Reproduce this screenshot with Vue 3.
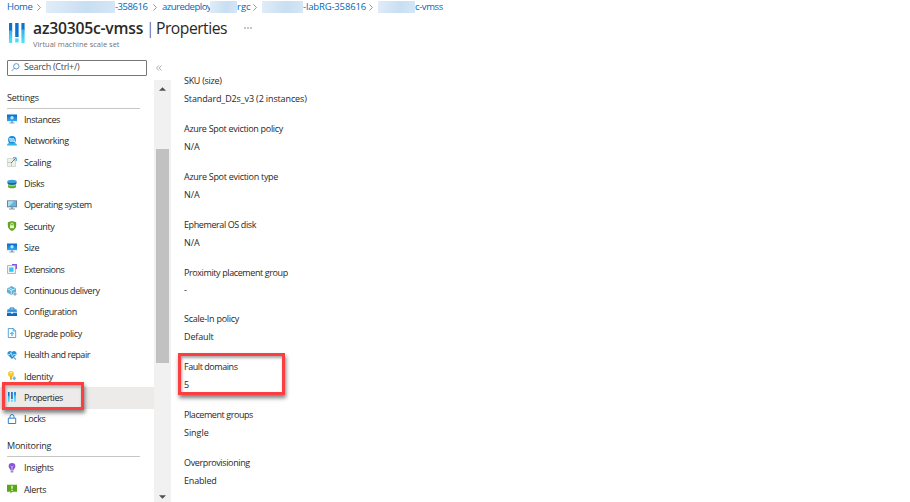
<script setup>
const crumbs = [
  { w: 39, text: 'Home', ls: -0.3, sep: true },
  { w: 69, mask: true },
  { w: 47, text: '-358616', ls: -0.45, sep: true },
  { w: 48, text: 'azuredeploy', ls: -0.5 },
  { w: 27, mask: true },
  { w: 25, text: 'rgc', ls: 0, sep: true },
  { w: 41, mask: true },
  { w: 75, text: '-labRG-358616', ls: -0.15, sep: true },
  { w: 37, mask: true },
  { w: 40, text: 'c-vmss', ls: -0.4 }
]
// label, icon, tracking
const groups = [
  {
    title: 'Settings',
    items: [
      ['Instances', 'monitor', -0.42], ['Networking', 'network', -0.38], ['Scaling', 'scaling', -0.3], ['Disks', 'disks', -0.4],
      ['Operating system', 'os', -0.4], ['Security', 'shield', -0.38], ['Size', 'monitor', -0.3], ['Extensions', 'extension', -0.5],
      ['Continuous delivery', 'delivery', -0.42], ['Configuration', 'toolbox', -0.35], ['Upgrade policy', 'upgrade', -0.35],
      ['Health and repair', 'health', -0.45], ['Identity', 'key', -0.35], ['Properties', 'bars', -0.48], ['Locks', 'lock', -0.4]
    ]
  },
  { title: 'Monitoring', items: [['Insights', 'bulb', -0.38], ['Alerts', 'alert', -0.35]] }
]
// label, value, label tracking, value tracking
const fields = [
  ['SKU (size)', 'Standard_D2s_v3 (2 instances)', -0.3, -0.13],
  ['Azure Spot eviction policy', 'N/A', -0.31, 0],
  ['Azure Spot eviction type', 'N/A', -0.29, 0],
  ['Ephemeral OS disk', 'N/A', -0.4, 0],
  ['Proximity placement group', '-', -0.4, 0],
  ['Scale-In policy', 'Default', -0.27, -0.15],
  ['Fault domains', '5', -0.45, 0],
  ['Placement groups', 'Single', -0.43, -0.05],
  ['Overprovisioning', 'Enabled', -0.37, -0.18]
]
</script>

<template>
  <div class="page">
    <svg class="defs" width="0" height="0">
      <defs>
        <linearGradient id="blue" x2="0" y2="1"><stop stop-color="#0869c9" /><stop offset="1" stop-color="#38a5f5" /></linearGradient>
        <linearGradient id="cyan" x2="0" y2="1"><stop stop-color="#30a9e8" /><stop offset="1" stop-color="#50e6ff" /></linearGradient>
      </defs>
      <symbol id="monitor" viewBox="0 0 10 10"><path fill="url(#blue)" d="M0 .5h10v6.700H0z" /><circle cx="5" cy="3.800" r="1.700" fill="#9cefff" /><path fill="#8ba0ad" d="M4 7.200h2v1.400h1.500v.8h-5v-.8H4z" /></symbol>
      <symbol id="network" viewBox="0 0 10 10"><circle cx="5" cy="4" r="3.900" fill="#1688d8" /><path d="M2.500 2.500l4.500.3 1 3-5-.5zM2.500 2.500L8 5.800M7 2.800L3 5.300" fill="none" stroke="#c8f3ff" stroke-width=".8" /><path d="M0 9.600C.3 7 2.500 6.600 5 7.600c2.500-1 4.700-.6 5 2z" fill="#2fb4e4" /></symbol>
      <symbol id="scaling" viewBox="0 0 10 10"><path d="M.5 1.500h6v2h2v6h-8z" fill="#edf1e9" stroke="#c5cfc4" stroke-width=".7" /><path d="M.5 5.500h4v4" fill="none" stroke="#afc0b4" stroke-width=".7" /><path d="M4 6L8.700 1.300M6 .8h3.200V4" fill="none" stroke="#2b91dd" stroke-width="1" /></symbol>
      <symbol id="disks" viewBox="0 0 10 10"><path d="M1 5.500h8v2.300c0 2-8 2-8 0z" fill="#65a82b" /><ellipse cx="5" cy="5.700" rx="4" ry="1.500" fill="#a5d75a" /><path d="M.5 2.300h9v2.300c0 1.800-9 1.800-9 0z" fill="#0e69ae" /><ellipse cx="5" cy="2.400" rx="4.500" ry="1.600" fill="#3c9fde" /></symbol>
      <symbol id="os" viewBox="0 0 10 10"><path fill="#6f8798" d="M0 .3h10v7H0z" /><path fill="#5fb9e5" d="M1 1.200h8v5H1z" /><path fill="#a8dff5" d="M1 1.200h6l-5 5H1z" /><path fill="#8799a5" d="M4 7.200h2v1.200h2v1H2v-1h2z" /></symbol>
      <symbol id="shield" viewBox="0 0 10 10"><path fill="#62a51e" d="M5 0l4.200 1.200v3.500C9.200 7.300 7 9 5 10 3 9 .8 7.300.8 4.700V1.200z" /><rect x="3" y="4.200" width="4" height="3" rx=".4" fill="#e6f8c6" /><path d="M3.800 4.400V3.200a1.200 1.200 0 012.400 0v1.200" fill="none" stroke="#e6f8c6" stroke-width=".9" /></symbol>
      <symbol id="extension" viewBox="0 0 10 10"><path d="M.5 1.500h8v8h-8z" fill="#f2f2f2" stroke="#a6a6a6" stroke-width=".8" /><path fill="#31c6ed" d="M2.200 3.500h4.300v4.300H2.200z" /><path d="M5 .7h4.300V5" fill="none" stroke="#8255df" stroke-width="1.300" /></symbol>
      <symbol id="delivery" viewBox="0 0 10 10"><path fill="#5eafd6" d="M4.500 0L9 2.500v4L4.500 9 0 6.500v-4z" /><path d="M.6 2.800l3.700 2v3.600M4.300 4.800l4-2.200M2.200 1.700l4 2.200" fill="none" stroke="#ceeffa" stroke-width=".9" /><circle cx="8" cy="8" r="2" fill="#fff" /><circle cx="8" cy="8" r="1.100" fill="none" stroke="#708b99" stroke-width="1" /></symbol>
      <symbol id="toolbox" viewBox="0 0 10 10"><path d="M3 2.500V1h4v1.500" fill="none" stroke="#1474c4" stroke-width="1" /><path fill="#2f92de" d="M.5 2.300h9L10 5v4H0V5z" /><path fill="#1468b8" d="M0 6.300h10V9H0z" /><path d="M0 5.400h10" stroke="#a1dcff" stroke-width="1" /><path fill="#fff" d="M4 5h2v1.500H4z" /></symbol>
      <symbol id="upgrade" viewBox="0 0 10 10"><path d="M1.300.5h5L8.700 3v6.500H1.300zM6.200.5V3h2.500" fill="#f7fcff" stroke="#3a91cd" stroke-width=".8" /><path d="M5 8V4.500M3.300 6L5 4.300 6.700 6" fill="none" stroke="#2a9bd7" /></symbol>
      <symbol id="health" viewBox="0 0 10 10"><path d="M5 9L.7 4.700C-.5 2 3-.3 5 2c2-2.300 5.500 0 4.300 2.700z" fill="#2492db" /><path d="M1 4.500h2l1-2 1.400 4 1-2H9" fill="none" stroke="#e3f7ff" stroke-width=".7" /><path d="M6.500 7.300L9 9.500" stroke="#7aabc9" stroke-width="1.400" /></symbol>
      <symbol id="key" viewBox="0 0 10 10"><circle cx="4" cy="3" r="3" fill="#f8c92e" /><path d="M3 5h2v3L4 9.300 3 8.200z" fill="#eeb31c" /><circle cx="4" cy="1.800" r=".8" fill="#fff" /><path d="M7.200 4.900l2 2.300-2 2.300-2-2.300z" fill="#73bbe4" /></symbol>
      <symbol id="bars" viewBox="0 0 16 20"><path d="M0 0h3.200v9H0zM6.200 0h3.400v14H6.200zM12.400 0h3.200v7h-3.200z" fill="#0b73cf" /><path d="M0 7.500h3.200V20H0zM6.200 15.500h3.400v3.900H6.200zM12.400 6.200h3.200V20h-3.200z" fill="url(#cyan)" /></symbol>
      <symbol id="lock" viewBox="0 0 10 10"><path d="M1.300 4.200h7.400v5.300H1.300zM3 4V2.500a2 2 0 014 0V4" fill="none" stroke="#2f82cf" stroke-width="1" /></symbol>
      <symbol id="bulb" viewBox="0 0 10 10"><path d="M5 0a3.400 3.400 0 013.400 3.300C8.400 5.200 6.500 5.700 6.500 7.500h-3C3.500 5.700 1.600 5.200 1.600 3.300A3.400 3.400 0 015 0z" fill="#8754d5" /><path d="M3.500 3l1.500 1.200L6.500 3M5 4v3" fill="none" stroke="#d9c3ff" stroke-width=".8" /><path d="M3.700 8h2.600v1.500H3.700z" fill="#949494" /></symbol>
      <symbol id="alert" viewBox="0 0 10 10"><path d="M0 .8h10v7H5.500L3.500 9.500V7.800H0z" fill="#5ba616" /><path d="M5 1.800v3M5 5.700v1.200" stroke="#f0ffd9" stroke-width="1.300" /></symbol>
    </svg>

    <nav class="crumbs">
      <span v-for="(c, i) in crumbs" :key="i" class="crumb" :class="{ mask: c.mask }" :style="{ width: c.w + 'px' }">
        <span v-if="c.text" :style="{ letterSpacing: c.ls + 'px' }">{{ c.text }}</span>
        <svg v-if="c.sep" class="sep" viewBox="0 0 4 7"><path d="M.4.4l3 3.100-3 3.100" fill="none" stroke="#777" stroke-width=".8" /></svg>
      </span>
    </nav>

    <header class="head">
      <svg class="logo"><use href="#bars" /></svg>
      <div>
        <h1><b>az30305c-vmss</b><i>|</i><span>Properties</span><em></em></h1>
        <p>Virtual machine scale set</p>
      </div>
    </header>

    <main class="body">
      <aside class="side">
        <div class="tools">
          <div class="search">
            <svg viewBox="0 0 9 9"><circle cx="5.300" cy="3.300" r="2.700" /><path d="M3.300 5.300L.6 8" /></svg>
            <span>Search (Ctrl+/)</span>
          </div>
          <svg class="collapse" viewBox="0 0 6 6"><path d="M2.800.5L.5 3l2.300 2.500M5.500.5L3.200 3l2.300 2.500" /></svg>
        </div>
        <div class="scroll">
          <div class="menu">
            <section v-for="g in groups" :key="g.title">
              <h2>{{ g.title }}</h2>
              <ul>
                <li v-for="it in g.items" :key="it[0]" :class="{ active: it[0] === 'Properties' }">
                  <svg class="icon"><use :href="'#' + it[1]" /></svg>
                  <span :style="{ letterSpacing: it[2] + 'px' }">{{ it[0] }}</span>
                  <div v-if="it[0] === 'Properties'" class="outline nav-outline"></div>
                </li>
              </ul>
            </section>
          </div>
          <div class="bar">
            <svg viewBox="0 0 8 4"><path d="M0 4l4-4 4 4z" /></svg>
            <div class="thumb"></div>
            <svg class="down" viewBox="0 0 8 4"><path d="M0 0l4 4 4-4z" /></svg>
          </div>
        </div>
      </aside>
      <dl class="fields">
        <div v-for="f in fields" :key="f[0]" class="field" :class="{ short: f[1] === '-' }">
          <dt :style="{ letterSpacing: f[2] + 'px' }">{{ f[0] }}</dt>
          <dd :style="{ letterSpacing: f[3] + 'px' }">{{ f[1] }}</dd>
          <div v-if="f[0] === 'Fault domains'" class="outline field-outline"></div>
        </div>
      </dl>
    </main>
  </div>
</template>

<style>
body { background: #fff; }
</style>
<style scoped>
* { box-sizing: border-box; margin: 0; padding: 0; }
.page { width: 910px; height: 502px; overflow: hidden; display: flex; flex-direction: column; font-family: "Open Sans", "Noto Sans", sans-serif; font-size: 9px; color: #292827; white-space: nowrap; background: #fff; }
.defs { position: absolute; }
.crumbs { display: flex; height: 14px; padding: 1px 0 0 7px; color: #0067b8; font-size: 9.500px; line-height: 12px; }
.crumb { flex: none; display: flex; justify-content: space-between; align-items: center; height: 12px; }
.mask { background: linear-gradient(100deg, #e1edf8, #c8def2 60%, #d6e7f6); }
.sep { width: 4px; height: 7px; margin-right: 5px; }
.head { display: flex; height: 46px; padding: 4px 0 0 9px; }
.logo { width: 16px; height: 20px; margin: 5px 8px 0 0; }
h1 { display: flex; align-items: center; height: 20px; font-size: 15.700px; font-weight: 400; line-height: 20px; }
h1 b { font-weight: 600; width: 112px; letter-spacing: -.22px; }
h1 i { font-style: normal; width: 11px; padding-left: 1px; font-weight: 300; }
h1 span { width: 88px; letter-spacing: -.5px; }
h1 em { width: 8px; height: 2px; background: repeating-linear-gradient(90deg, #c5c5c5 0 2px, transparent 2px 3px); }
.head p { font-size: 7.500px; line-height: 11px; color: #767472; padding-top: 1px; }
.body { display: flex; flex: 1; min-height: 0; }
.side { width: 171px; display: flex; flex-direction: column; }
.tools { display: flex; align-items: center; height: 20px; padding: 0 0 4px 7px; }
.search { display: flex; align-items: center; width: 140px; height: 16px; border: 1px solid #767676; border-radius: 1px; padding: 0 0 2px 3px; gap: 4px; color: #4b4a49; letter-spacing: -.27px; line-height: 11px; }
.search svg { width: 9px; height: 9px; fill: none; stroke: #3b83c0; stroke-width: .8; }
.search span { padding-bottom: 1px; }
.collapse { width: 6px; height: 6px; margin-left: 9px; fill: none; stroke: #888; stroke-width: .7; }
.scroll { display: flex; flex: 1; min-height: 0; }
.menu { width: 154px; padding-top: 7.500px; }
h2 { font-size: 9px; font-weight: 400; line-height: 20px; height: 21.500px; width: 133px; margin-left: 7px; letter-spacing: -.2px; border-bottom: 1px solid #c8c6c4; }
section + section { padding-top: 5.500px; }
ul { list-style: none; padding-top: .4px; }
li { position: relative; display: flex; align-items: center; height: 21.400px; padding: 0 0 1.400px 7px; }
li.active { background: #edebe9; }
.icon { width: 10px; height: 10px; margin-right: 7px; }
.bar { width: 17px; background: #f1f1f1; display: flex; flex-direction: column; align-items: center; padding: 7px 1px 3px 0; }
.bar svg { width: 7px; height: 4px; fill: #505050; }
.thumb { width: 13px; height: 214px; margin-top: 58px; background: #c1c1c1; }
.bar .down { margin-top: auto; }
.fields { padding: 12px 0 0 13px; }
.field { position: relative; height: 48px; }
.field.short { height: 46px; }
.field.short dd { margin-top: -1px; }
dt, dd { height: 18px; line-height: 18px; }
.outline { position: absolute; border: 3px solid #fb3e40; box-shadow: 1px 3px 4px rgba(0,0,0,.5), inset 1px 2px 3px rgba(0,0,0,.35); z-index: 2; }
.nav-outline { left: 2px; top: -5px; width: 82px; height: 28px; }
.field-outline { left: -6px; top: -5px; width: 107px; height: 42px; }
</style>
